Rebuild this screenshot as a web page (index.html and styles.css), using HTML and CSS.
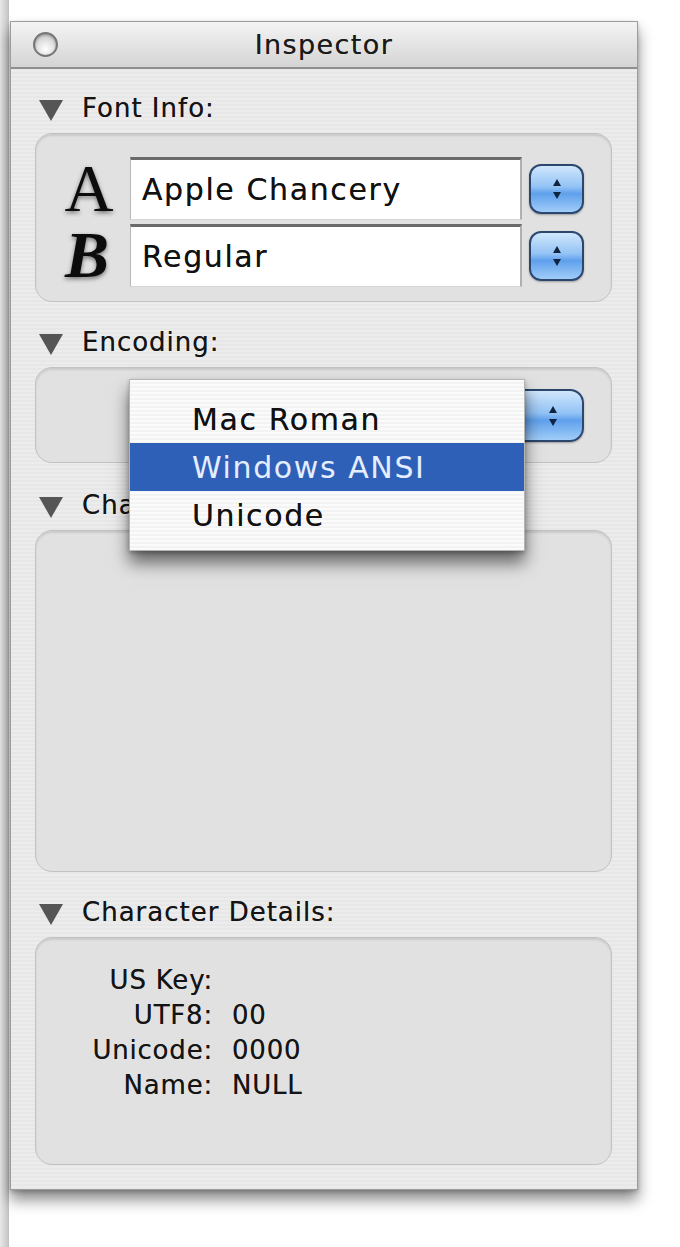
FILE: index.html
```html
<!DOCTYPE html>
<html>
<head>
<meta charset="utf-8">
<link rel="stylesheet" href="styles.css">
<title>Inspector</title>
</head>
<body>
<div class="page">
  <div class="desk-edge"></div>
  <div class="window">
    <div class="titlebar">
      <span class="close"></span>
      <span class="title">Inspector</span>
      <span></span>
    </div>
    <div class="content">
      <section class="section">
        <div class="disclosure">
          <svg class="tri" viewBox="0 0 24 22" width="24" height="22"><path d="M0 1 L24 1 L12 22 Z" fill="#555"/></svg>
          <span>Font Info:</span>
        </div>
        <div class="box font-box">
          <div class="font-row">
            <span class="glyph glyph-a">A</span>
            <div class="field">Apple Chancery</div>
            <span class="stepper"><svg viewBox="0 0 12 24" width="12" height="24"><path d="M6 2 L10 9 L2 9 Z M6 22 L10 15 L2 15 Z" fill="#10243f"/></svg></span>
          </div>
          <div class="font-row">
            <span class="glyph glyph-b">B</span>
            <div class="field">Regular</div>
            <span class="stepper"><svg viewBox="0 0 12 24" width="12" height="24"><path d="M6 2 L10 9 L2 9 Z M6 22 L10 15 L2 15 Z" fill="#10243f"/></svg></span>
          </div>
        </div>
      </section>

      <section class="section encoding">
        <div class="disclosure">
          <svg class="tri" viewBox="0 0 24 22" width="24" height="22"><path d="M0 1 L24 1 L12 22 Z" fill="#555"/></svg>
          <span>Encoding:</span>
        </div>
        <div class="box enc-box">
          <div class="popup">
            <div class="popup-body"></div>
            <span class="stepper big"><svg viewBox="0 0 12 24" width="12" height="24"><path d="M6 2 L10 9 L2 9 Z M6 22 L10 15 L2 15 Z" fill="#10243f"/></svg></span>
          </div>
          <ul class="menu">
            <li>Mac Roman</li>
            <li class="selected">Windows ANSI</li>
            <li>Unicode</li>
          </ul>
        </div>
      </section>

      <section class="section">
        <div class="disclosure">
          <svg class="tri" viewBox="0 0 24 22" width="24" height="22"><path d="M0 1 L24 1 L12 22 Z" fill="#555"/></svg>
          <span>Character Viewer:</span>
        </div>
        <div class="box viewer-box"></div>
      </section>

      <section class="section">
        <div class="disclosure">
          <svg class="tri" viewBox="0 0 24 22" width="24" height="22"><path d="M0 1 L24 1 L12 22 Z" fill="#555"/></svg>
          <span>Character Details:</span>
        </div>
        <div class="box details-box">
          <dl class="details">
            <dt>US Key:</dt><dd></dd>
            <dt>UTF8:</dt><dd>00</dd>
            <dt>Unicode:</dt><dd>0000</dd>
            <dt>Name:</dt><dd>NULL</dd>
          </dl>
        </div>
      </section>
    </div>
  </div>
</div>
</body>
</html>
```

FILE: styles.css
```css
* { box-sizing: border-box; }

html, body {
  margin: 0;
  padding: 0;
  background: #ffffff;
}

body {
  font-family: "DejaVu Sans", "Liberation Sans", sans-serif;
  color: #111;
}

.page {
  display: flex;
  width: 680px;
  height: 1247px;
  overflow: hidden;
}

.desk-edge {
  width: 9px;
  flex: none;
  background: linear-gradient(to right, #e8e8e8, #cfcfcf 70%, #c0c0c0);
}

.window {
  margin-top: 21px;
  margin-left: 1px;
  width: 628px;
  height: 1169px;
  flex: none;
  border: 1px solid #9c9c9c;
  background: repeating-linear-gradient(to bottom, #ececec 0 2px, #e7e7e7 2px 4px);
  box-shadow: 0 10px 14px rgba(0, 0, 0, 0.45), 0 2px 4px rgba(0, 0, 0, 0.2);
  display: flex;
  flex-direction: column;
}

.titlebar {
  height: 47px;
  flex: none;
  display: grid;
  grid-template-columns: 1fr auto 1fr;
  align-items: center;
  border-bottom: 2px solid #8f8f8f;
  background: linear-gradient(to bottom, #f4f4f4 0%, #e4e4e4 50%, #d4d4d4 100%);
}

.close {
  margin-left: 22px;
  width: 25px;
  height: 25px;
  border-radius: 50%;
  border: 2px solid #777;
  background: radial-gradient(circle at 50% 72%, #ffffff 0%, #e6e6e6 40%, #b8b8b8 100%);
  box-shadow: inset 0 1px 2px rgba(0, 0, 0, 0.3);
}

.title {
  font-size: 27px;
  color: #1a1a1a;
  letter-spacing: 1.4px;
  text-shadow: 0 0 0.6px rgba(0, 0, 0, 0.6);
}

.content {
  padding: 19px 25px 25px 24px;
  display: flex;
  flex-direction: column;
}

.section {
  margin-bottom: 20px;
}

.disclosure {
  height: 40px;
  display: flex;
  align-items: center;
  font-size: 26px;
  letter-spacing: 1px;
  color: #141414;
  margin-bottom: 5px;
  text-shadow: 0 0 0.6px rgba(0, 0, 0, 0.6);
}

.tri {
  margin-left: 4px;
  margin-right: 19px;
  margin-top: 4px;
  flex: none;
}

.box {
  width: 577px;
  border: 1px solid #c2c2c2;
  border-radius: 17px;
  background: #e1e1e1;
  box-shadow: inset 0 2px 2px rgba(0, 0, 0, 0.10);
}

.font-box {
  height: 169px;
  padding: 23px 27px 0 0;
  display: flex;
  flex-direction: column;
  gap: 4px;
}

.font-row {
  display: grid;
  grid-template-columns: 94px 1fr 62px;
  align-items: center;
  height: 63px;
}

.glyph {
  font-family: "Liberation Serif", "DejaVu Serif", serif;
  color: #0c0c0c;
  text-align: center;
  text-shadow: 0 2px 4px rgba(0, 0, 0, 0.5);
  line-height: 0.85;
}

.glyph-a {
  font-size: 68px;
  padding-left: 12px;
}

.glyph-b {
  font-size: 66px;
  font-style: italic;
  font-weight: bold;
  padding-left: 8px;
}

.field {
  height: 63px;
  background: #ffffff;
  border-top: 3px solid #6a6a6a;
  border-left: 1px solid #b8b8b8;
  border-right: 2px solid #b0b0b0;
  border-bottom: 1px solid #d6d6d6;
  display: flex;
  align-items: center;
  padding-left: 11px;
  font-size: 30px;
  letter-spacing: 1.6px;
  color: #111;
  text-shadow: 0 0 0.6px rgba(0, 0, 0, 0.6);
}

.stepper {
  justify-self: end;
  width: 55px;
  height: 50px;
  border-radius: 12px;
  border: 2px solid #2b476e;
  background: linear-gradient(to bottom, #d0e6fc 0%, #93c3f5 45%, #5fa0ec 60%, #a0cdf8 100%);
  display: flex;
  align-items: center;
  justify-content: center;
  box-shadow: 0 1px 2px rgba(0, 0, 0, 0.3);
}

.encoding {
  margin-bottom: 22px;
}

.enc-box {
  position: relative;
  height: 96px;
  padding: 21px 27px 0 94px;
}

.popup {
  display: flex;
  height: 53px;
}

.popup-body {
  flex: 1;
  border: 1px solid #9a9a9a;
  border-right: none;
  border-radius: 10px 0 0 10px;
  background: linear-gradient(to bottom, #ffffff, #eeeeee);
}

.stepper.big {
  width: 62px;
  height: 53px;
  border-radius: 0 14px 14px 0;
}

.menu {
  position: absolute;
  left: 93px;
  top: 11px;
  width: 396px;
  height: 172px;
  margin: 0;
  padding: 15px 0 0 0;
  list-style: none;
  background: repeating-linear-gradient(to bottom, #fbfbfb 0 2px, #f3f3f3 2px 4px);
  border: 1px solid #b5b5b5;
  box-shadow: 0 12px 16px rgba(0, 0, 0, 0.55), 0 2px 4px rgba(0, 0, 0, 0.25);
  z-index: 2;
}

.menu li {
  height: 48px;
  display: flex;
  align-items: center;
  padding-left: 62px;
  font-size: 30px;
  letter-spacing: 1.6px;
  color: #111;
  text-shadow: 0 0 0.6px rgba(0, 0, 0, 0.6);
}

.menu li.selected {
  background: #2f60b8;
  color: #e4eeff;
  text-shadow: none;
}

.viewer-box {
  height: 342px;
}

.details-box {
  height: 228px;
  padding-top: 24px;
}

.details {
  margin: 0;
  display: grid;
  grid-template-columns: 177px auto;
  column-gap: 19px;
  grid-auto-rows: 35px;
  align-items: center;
  font-size: 26px;
  letter-spacing: 0.8px;
  color: #141414;
  text-shadow: 0 0 0.6px rgba(0, 0, 0, 0.6);
}

.details dt {
  text-align: right;
}

.details dd {
  margin: 0;
}
```
